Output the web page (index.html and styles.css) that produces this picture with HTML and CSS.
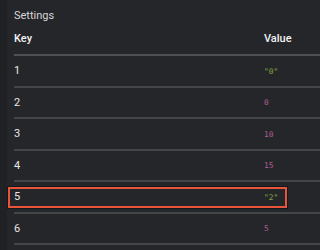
FILE: index.html
```html
<!DOCTYPE html>
<html>
<head>
<meta charset="utf-8">
<link rel="stylesheet" href="styles.css">
</head>
<body>
<div class="page">
  <div class="panel">
    <div class="title">Settings</div>
    <div class="table">
      <div class="row head"><div class="key">Key</div><div class="val">Value</div></div>
      <div class="row"><div class="key">1</div><div class="val"><span class="str">"0"</span></div></div>
      <div class="row"><div class="key">2</div><div class="val"><span class="num">0</span></div></div>
      <div class="row"><div class="key">3</div><div class="val"><span class="num">10</span></div></div>
      <div class="row"><div class="key">4</div><div class="val"><span class="num">15</span></div></div>
      <div class="row selected"><div class="key">5</div><div class="val"><span class="str">"2"</span></div><div class="focus"></div></div>
      <div class="row"><div class="key">6</div><div class="val"><span class="num">5</span></div></div>
    </div>
  </div>
</div>
</body>
</html>
```
FILE: styles.css
```css
html, body {
  margin: 0;
  padding: 0;
  background: #202125;
}
body {
  width: 320px;
  height: 250px;
  overflow: hidden;
  font-family: Roboto, "Liberation Sans", sans-serif;
  color: #e6e6e8;
}
.page {
  display: flex;
  height: 250px;
}
.panel {
  margin-left: 7px;
  flex: 1;
  background: #25262a;
  padding-left: 7px;
  overflow: hidden;
}
.title {
  padding-top: 9px;
  font-size: 11px;
  line-height: 13px;
  color: #d6d6d8;
}
.table {
  display: flex;
  flex-direction: column;
}
.row {
  position: relative;
  display: flex;
  align-items: center;
  height: 31.5px;
  box-sizing: border-box;
  border-bottom: 2px solid #444549;
  font-size: 11px;
  line-height: 13px;
}
.row.head {
  height: 34px;
  font-weight: 500;
  color: #f2f2f4;
  border-bottom-color: #505155;
}
.key {
  flex: 1;
}
.val {
  width: 56px;
}
.str, .num {
  font-family: "DejaVu Sans Mono", "Liberation Mono", monospace;
  font-size: 7.8px;
}
.str { color: #84a43f; }
.num { color: #b45d8f; }
.focus {
  position: absolute;
  left: -6px;
  right: 33px;
  top: 5px;
  height: 21px;
  box-sizing: border-box;
  border: 2px solid #e8543a;
  box-shadow: 0 0 0 1px #101a20;
}
```
